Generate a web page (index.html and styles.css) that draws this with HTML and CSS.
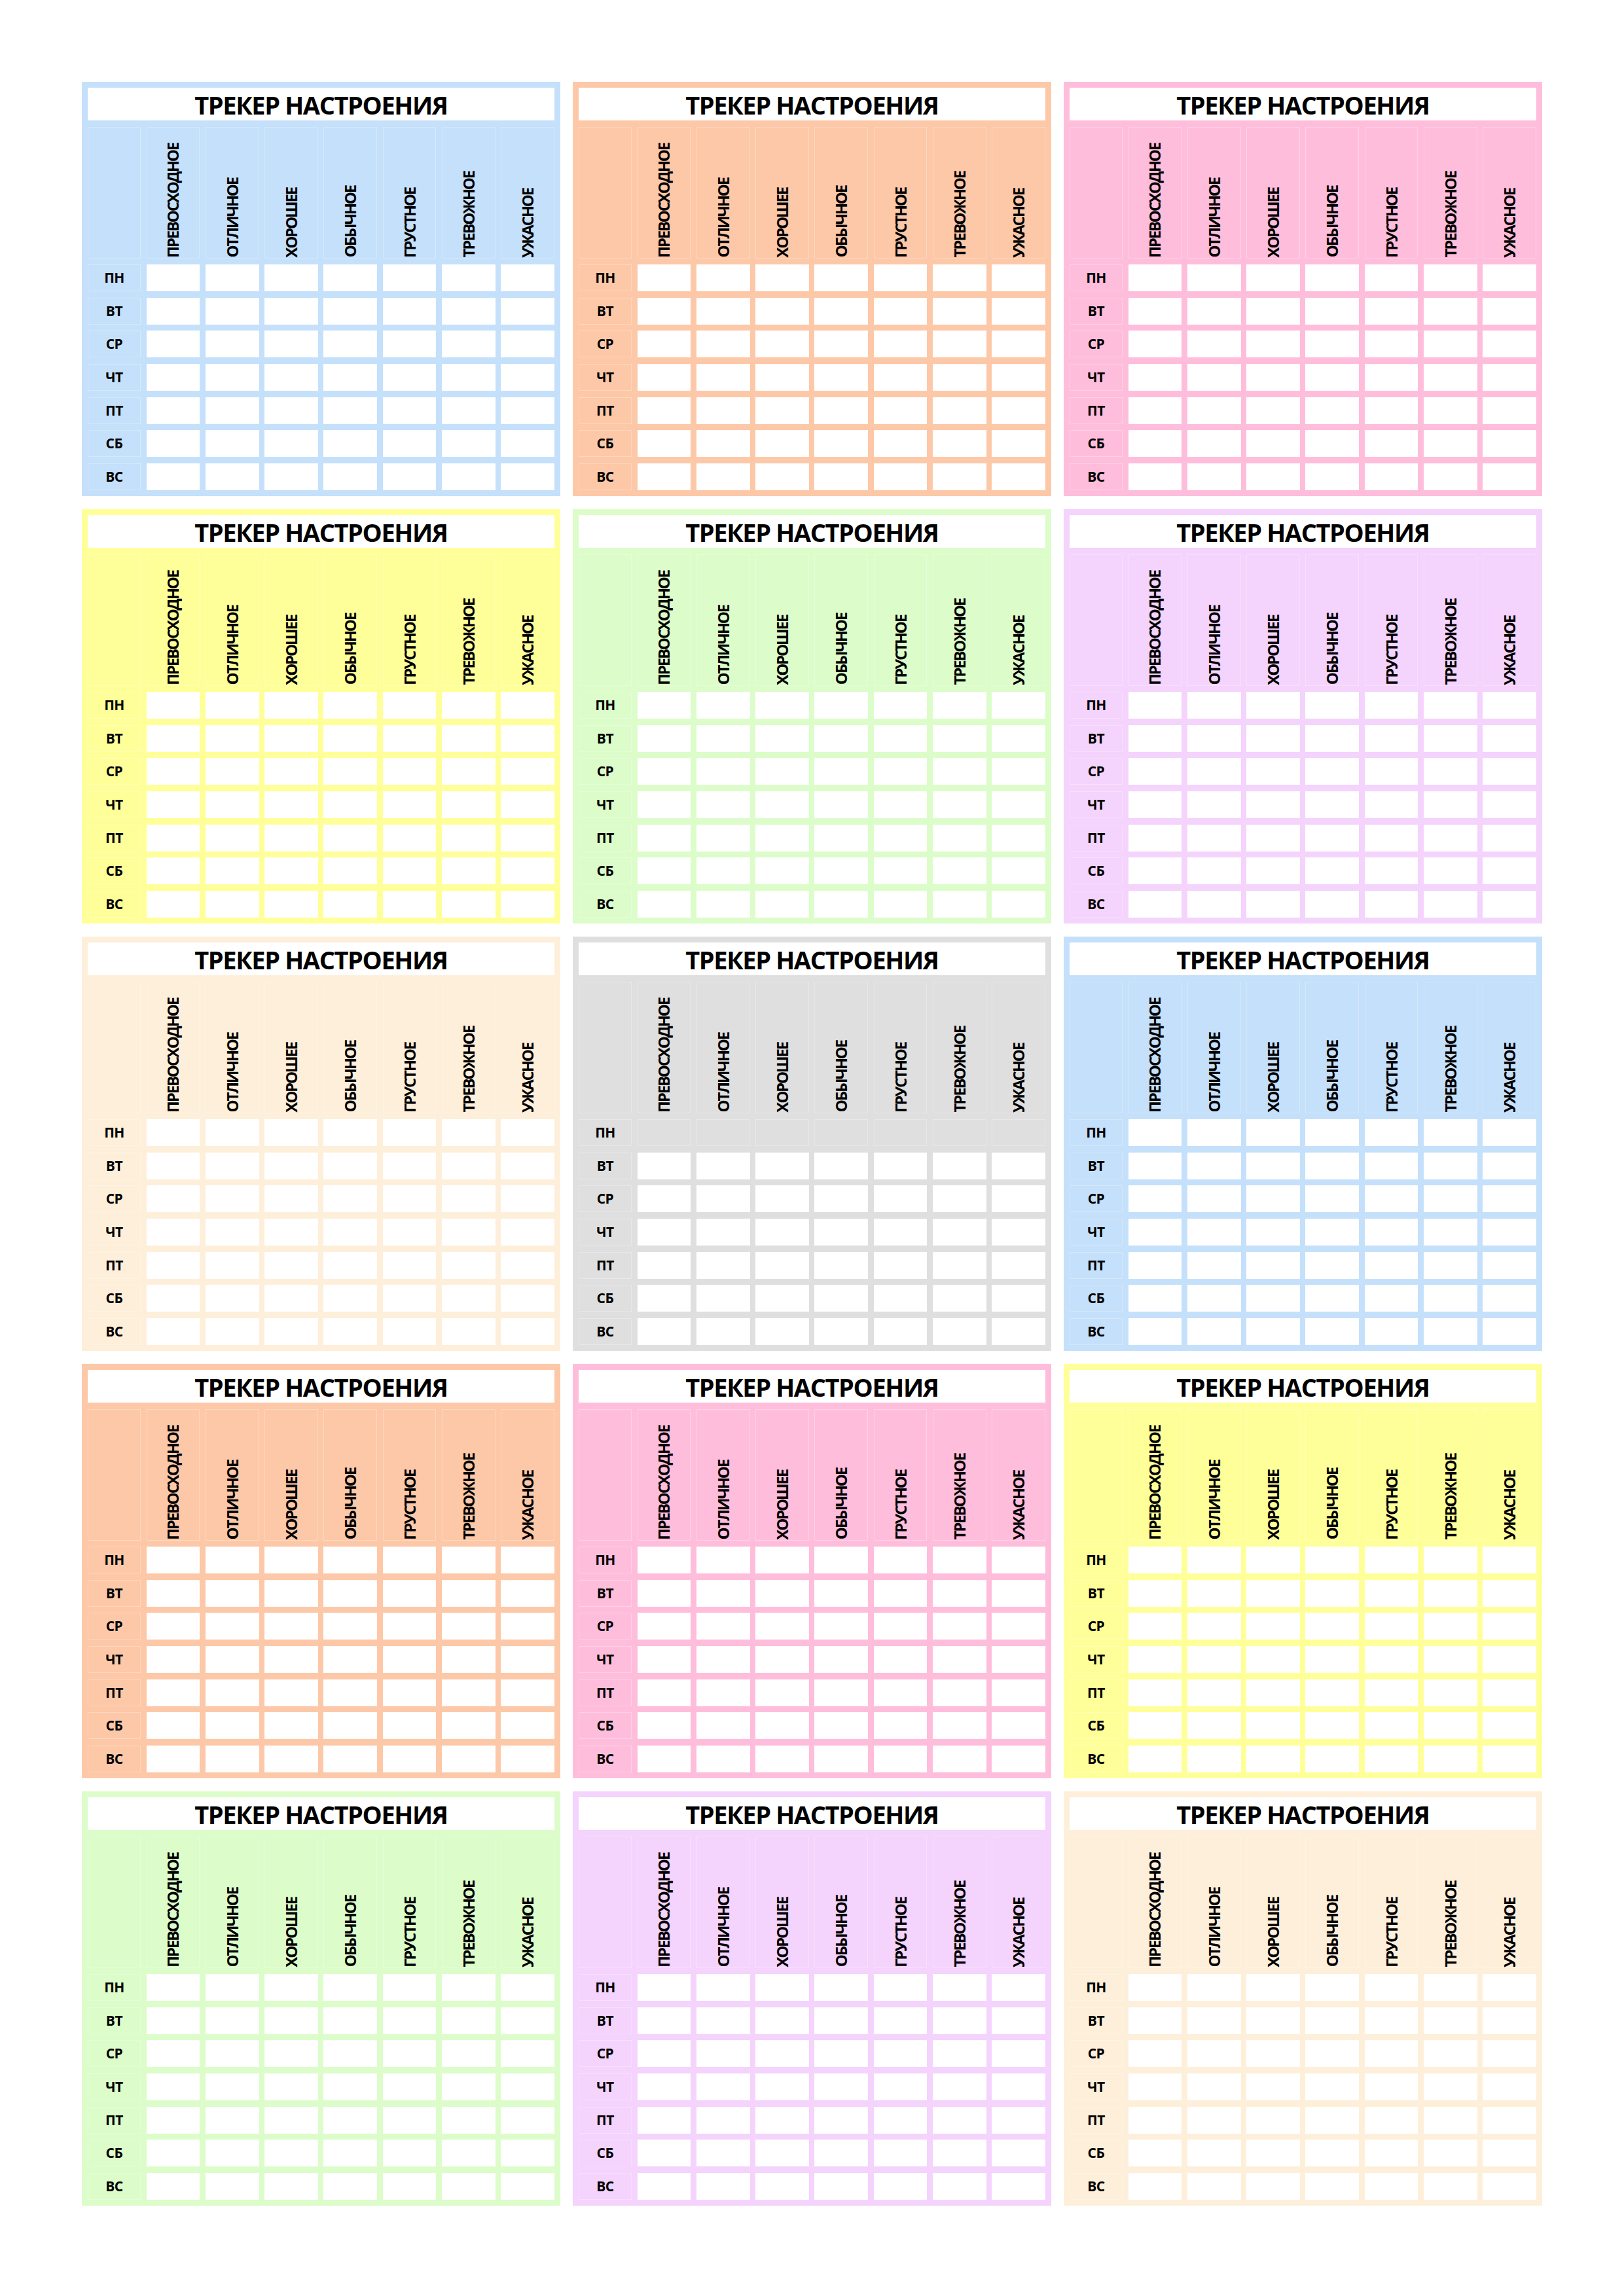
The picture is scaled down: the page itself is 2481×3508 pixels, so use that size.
FILE: index.html
```html
<!DOCTYPE html>
<html lang="ru">
<head>
<meta charset="utf-8">
<title>Трекер настроения</title>
<link rel="stylesheet" href="styles.css">
</head>
<body>
<main class="page">

<section class="card blue">
<h2 class="title">ТРЕКЕР НАСТРОЕНИЯ</h2>
<div class="corner"></div><div class="mood"><span>ПРЕВОСХОДНОЕ</span></div><div class="mood"><span>ОТЛИЧНОЕ</span></div><div class="mood"><span>ХОРОШЕЕ</span></div><div class="mood"><span>ОБЫЧНОЕ</span></div><div class="mood"><span>ГРУСТНОЕ</span></div><div class="mood"><span>ТРЕВОЖНОЕ</span></div><div class="mood"><span>УЖАСНОЕ</span></div>
<div class="day">ПН</div><div class="cell"></div><div class="cell"></div><div class="cell"></div><div class="cell"></div><div class="cell"></div><div class="cell"></div><div class="cell"></div>
<div class="day">ВТ</div><div class="cell"></div><div class="cell"></div><div class="cell"></div><div class="cell"></div><div class="cell"></div><div class="cell"></div><div class="cell"></div>
<div class="day">СР</div><div class="cell"></div><div class="cell"></div><div class="cell"></div><div class="cell"></div><div class="cell"></div><div class="cell"></div><div class="cell"></div>
<div class="day">ЧТ</div><div class="cell"></div><div class="cell"></div><div class="cell"></div><div class="cell"></div><div class="cell"></div><div class="cell"></div><div class="cell"></div>
<div class="day">ПТ</div><div class="cell"></div><div class="cell"></div><div class="cell"></div><div class="cell"></div><div class="cell"></div><div class="cell"></div><div class="cell"></div>
<div class="day">СБ</div><div class="cell"></div><div class="cell"></div><div class="cell"></div><div class="cell"></div><div class="cell"></div><div class="cell"></div><div class="cell"></div>
<div class="day">ВС</div><div class="cell"></div><div class="cell"></div><div class="cell"></div><div class="cell"></div><div class="cell"></div><div class="cell"></div><div class="cell"></div>
</section>

<section class="card peach">
<h2 class="title">ТРЕКЕР НАСТРОЕНИЯ</h2>
<div class="corner"></div><div class="mood"><span>ПРЕВОСХОДНОЕ</span></div><div class="mood"><span>ОТЛИЧНОЕ</span></div><div class="mood"><span>ХОРОШЕЕ</span></div><div class="mood"><span>ОБЫЧНОЕ</span></div><div class="mood"><span>ГРУСТНОЕ</span></div><div class="mood"><span>ТРЕВОЖНОЕ</span></div><div class="mood"><span>УЖАСНОЕ</span></div>
<div class="day">ПН</div><div class="cell"></div><div class="cell"></div><div class="cell"></div><div class="cell"></div><div class="cell"></div><div class="cell"></div><div class="cell"></div>
<div class="day">ВТ</div><div class="cell"></div><div class="cell"></div><div class="cell"></div><div class="cell"></div><div class="cell"></div><div class="cell"></div><div class="cell"></div>
<div class="day">СР</div><div class="cell"></div><div class="cell"></div><div class="cell"></div><div class="cell"></div><div class="cell"></div><div class="cell"></div><div class="cell"></div>
<div class="day">ЧТ</div><div class="cell"></div><div class="cell"></div><div class="cell"></div><div class="cell"></div><div class="cell"></div><div class="cell"></div><div class="cell"></div>
<div class="day">ПТ</div><div class="cell"></div><div class="cell"></div><div class="cell"></div><div class="cell"></div><div class="cell"></div><div class="cell"></div><div class="cell"></div>
<div class="day">СБ</div><div class="cell"></div><div class="cell"></div><div class="cell"></div><div class="cell"></div><div class="cell"></div><div class="cell"></div><div class="cell"></div>
<div class="day">ВС</div><div class="cell"></div><div class="cell"></div><div class="cell"></div><div class="cell"></div><div class="cell"></div><div class="cell"></div><div class="cell"></div>
</section>

<section class="card pink">
<h2 class="title">ТРЕКЕР НАСТРОЕНИЯ</h2>
<div class="corner"></div><div class="mood"><span>ПРЕВОСХОДНОЕ</span></div><div class="mood"><span>ОТЛИЧНОЕ</span></div><div class="mood"><span>ХОРОШЕЕ</span></div><div class="mood"><span>ОБЫЧНОЕ</span></div><div class="mood"><span>ГРУСТНОЕ</span></div><div class="mood"><span>ТРЕВОЖНОЕ</span></div><div class="mood"><span>УЖАСНОЕ</span></div>
<div class="day">ПН</div><div class="cell"></div><div class="cell"></div><div class="cell"></div><div class="cell"></div><div class="cell"></div><div class="cell"></div><div class="cell"></div>
<div class="day">ВТ</div><div class="cell"></div><div class="cell"></div><div class="cell"></div><div class="cell"></div><div class="cell"></div><div class="cell"></div><div class="cell"></div>
<div class="day">СР</div><div class="cell"></div><div class="cell"></div><div class="cell"></div><div class="cell"></div><div class="cell"></div><div class="cell"></div><div class="cell"></div>
<div class="day">ЧТ</div><div class="cell"></div><div class="cell"></div><div class="cell"></div><div class="cell"></div><div class="cell"></div><div class="cell"></div><div class="cell"></div>
<div class="day">ПТ</div><div class="cell"></div><div class="cell"></div><div class="cell"></div><div class="cell"></div><div class="cell"></div><div class="cell"></div><div class="cell"></div>
<div class="day">СБ</div><div class="cell"></div><div class="cell"></div><div class="cell"></div><div class="cell"></div><div class="cell"></div><div class="cell"></div><div class="cell"></div>
<div class="day">ВС</div><div class="cell"></div><div class="cell"></div><div class="cell"></div><div class="cell"></div><div class="cell"></div><div class="cell"></div><div class="cell"></div>
</section>

<section class="card yellow">
<h2 class="title">ТРЕКЕР НАСТРОЕНИЯ</h2>
<div class="corner"></div><div class="mood"><span>ПРЕВОСХОДНОЕ</span></div><div class="mood"><span>ОТЛИЧНОЕ</span></div><div class="mood"><span>ХОРОШЕЕ</span></div><div class="mood"><span>ОБЫЧНОЕ</span></div><div class="mood"><span>ГРУСТНОЕ</span></div><div class="mood"><span>ТРЕВОЖНОЕ</span></div><div class="mood"><span>УЖАСНОЕ</span></div>
<div class="day">ПН</div><div class="cell"></div><div class="cell"></div><div class="cell"></div><div class="cell"></div><div class="cell"></div><div class="cell"></div><div class="cell"></div>
<div class="day">ВТ</div><div class="cell"></div><div class="cell"></div><div class="cell"></div><div class="cell"></div><div class="cell"></div><div class="cell"></div><div class="cell"></div>
<div class="day">СР</div><div class="cell"></div><div class="cell"></div><div class="cell"></div><div class="cell"></div><div class="cell"></div><div class="cell"></div><div class="cell"></div>
<div class="day">ЧТ</div><div class="cell"></div><div class="cell"></div><div class="cell"></div><div class="cell"></div><div class="cell"></div><div class="cell"></div><div class="cell"></div>
<div class="day">ПТ</div><div class="cell"></div><div class="cell"></div><div class="cell"></div><div class="cell"></div><div class="cell"></div><div class="cell"></div><div class="cell"></div>
<div class="day">СБ</div><div class="cell"></div><div class="cell"></div><div class="cell"></div><div class="cell"></div><div class="cell"></div><div class="cell"></div><div class="cell"></div>
<div class="day">ВС</div><div class="cell"></div><div class="cell"></div><div class="cell"></div><div class="cell"></div><div class="cell"></div><div class="cell"></div><div class="cell"></div>
</section>

<section class="card green">
<h2 class="title">ТРЕКЕР НАСТРОЕНИЯ</h2>
<div class="corner"></div><div class="mood"><span>ПРЕВОСХОДНОЕ</span></div><div class="mood"><span>ОТЛИЧНОЕ</span></div><div class="mood"><span>ХОРОШЕЕ</span></div><div class="mood"><span>ОБЫЧНОЕ</span></div><div class="mood"><span>ГРУСТНОЕ</span></div><div class="mood"><span>ТРЕВОЖНОЕ</span></div><div class="mood"><span>УЖАСНОЕ</span></div>
<div class="day">ПН</div><div class="cell"></div><div class="cell"></div><div class="cell"></div><div class="cell"></div><div class="cell"></div><div class="cell"></div><div class="cell"></div>
<div class="day">ВТ</div><div class="cell"></div><div class="cell"></div><div class="cell"></div><div class="cell"></div><div class="cell"></div><div class="cell"></div><div class="cell"></div>
<div class="day">СР</div><div class="cell"></div><div class="cell"></div><div class="cell"></div><div class="cell"></div><div class="cell"></div><div class="cell"></div><div class="cell"></div>
<div class="day">ЧТ</div><div class="cell"></div><div class="cell"></div><div class="cell"></div><div class="cell"></div><div class="cell"></div><div class="cell"></div><div class="cell"></div>
<div class="day">ПТ</div><div class="cell"></div><div class="cell"></div><div class="cell"></div><div class="cell"></div><div class="cell"></div><div class="cell"></div><div class="cell"></div>
<div class="day">СБ</div><div class="cell"></div><div class="cell"></div><div class="cell"></div><div class="cell"></div><div class="cell"></div><div class="cell"></div><div class="cell"></div>
<div class="day">ВС</div><div class="cell"></div><div class="cell"></div><div class="cell"></div><div class="cell"></div><div class="cell"></div><div class="cell"></div><div class="cell"></div>
</section>

<section class="card lavender">
<h2 class="title">ТРЕКЕР НАСТРОЕНИЯ</h2>
<div class="corner"></div><div class="mood"><span>ПРЕВОСХОДНОЕ</span></div><div class="mood"><span>ОТЛИЧНОЕ</span></div><div class="mood"><span>ХОРОШЕЕ</span></div><div class="mood"><span>ОБЫЧНОЕ</span></div><div class="mood"><span>ГРУСТНОЕ</span></div><div class="mood"><span>ТРЕВОЖНОЕ</span></div><div class="mood"><span>УЖАСНОЕ</span></div>
<div class="day">ПН</div><div class="cell"></div><div class="cell"></div><div class="cell"></div><div class="cell"></div><div class="cell"></div><div class="cell"></div><div class="cell"></div>
<div class="day">ВТ</div><div class="cell"></div><div class="cell"></div><div class="cell"></div><div class="cell"></div><div class="cell"></div><div class="cell"></div><div class="cell"></div>
<div class="day">СР</div><div class="cell"></div><div class="cell"></div><div class="cell"></div><div class="cell"></div><div class="cell"></div><div class="cell"></div><div class="cell"></div>
<div class="day">ЧТ</div><div class="cell"></div><div class="cell"></div><div class="cell"></div><div class="cell"></div><div class="cell"></div><div class="cell"></div><div class="cell"></div>
<div class="day">ПТ</div><div class="cell"></div><div class="cell"></div><div class="cell"></div><div class="cell"></div><div class="cell"></div><div class="cell"></div><div class="cell"></div>
<div class="day">СБ</div><div class="cell"></div><div class="cell"></div><div class="cell"></div><div class="cell"></div><div class="cell"></div><div class="cell"></div><div class="cell"></div>
<div class="day">ВС</div><div class="cell"></div><div class="cell"></div><div class="cell"></div><div class="cell"></div><div class="cell"></div><div class="cell"></div><div class="cell"></div>
</section>

<section class="card cream">
<h2 class="title">ТРЕКЕР НАСТРОЕНИЯ</h2>
<div class="corner"></div><div class="mood"><span>ПРЕВОСХОДНОЕ</span></div><div class="mood"><span>ОТЛИЧНОЕ</span></div><div class="mood"><span>ХОРОШЕЕ</span></div><div class="mood"><span>ОБЫЧНОЕ</span></div><div class="mood"><span>ГРУСТНОЕ</span></div><div class="mood"><span>ТРЕВОЖНОЕ</span></div><div class="mood"><span>УЖАСНОЕ</span></div>
<div class="day">ПН</div><div class="cell"></div><div class="cell"></div><div class="cell"></div><div class="cell"></div><div class="cell"></div><div class="cell"></div><div class="cell"></div>
<div class="day">ВТ</div><div class="cell"></div><div class="cell"></div><div class="cell"></div><div class="cell"></div><div class="cell"></div><div class="cell"></div><div class="cell"></div>
<div class="day">СР</div><div class="cell"></div><div class="cell"></div><div class="cell"></div><div class="cell"></div><div class="cell"></div><div class="cell"></div><div class="cell"></div>
<div class="day">ЧТ</div><div class="cell"></div><div class="cell"></div><div class="cell"></div><div class="cell"></div><div class="cell"></div><div class="cell"></div><div class="cell"></div>
<div class="day">ПТ</div><div class="cell"></div><div class="cell"></div><div class="cell"></div><div class="cell"></div><div class="cell"></div><div class="cell"></div><div class="cell"></div>
<div class="day">СБ</div><div class="cell"></div><div class="cell"></div><div class="cell"></div><div class="cell"></div><div class="cell"></div><div class="cell"></div><div class="cell"></div>
<div class="day">ВС</div><div class="cell"></div><div class="cell"></div><div class="cell"></div><div class="cell"></div><div class="cell"></div><div class="cell"></div><div class="cell"></div>
</section>

<section class="card grey">
<h2 class="title">ТРЕКЕР НАСТРОЕНИЯ</h2>
<div class="corner"></div><div class="mood"><span>ПРЕВОСХОДНОЕ</span></div><div class="mood"><span>ОТЛИЧНОЕ</span></div><div class="mood"><span>ХОРОШЕЕ</span></div><div class="mood"><span>ОБЫЧНОЕ</span></div><div class="mood"><span>ГРУСТНОЕ</span></div><div class="mood"><span>ТРЕВОЖНОЕ</span></div><div class="mood"><span>УЖАСНОЕ</span></div>
<div class="day">ПН</div><div class="cell blank"></div><div class="cell blank"></div><div class="cell blank"></div><div class="cell blank"></div><div class="cell blank"></div><div class="cell blank"></div><div class="cell blank"></div>
<div class="day">ВТ</div><div class="cell"></div><div class="cell"></div><div class="cell"></div><div class="cell"></div><div class="cell"></div><div class="cell"></div><div class="cell"></div>
<div class="day">СР</div><div class="cell"></div><div class="cell"></div><div class="cell"></div><div class="cell"></div><div class="cell"></div><div class="cell"></div><div class="cell"></div>
<div class="day">ЧТ</div><div class="cell"></div><div class="cell"></div><div class="cell"></div><div class="cell"></div><div class="cell"></div><div class="cell"></div><div class="cell"></div>
<div class="day">ПТ</div><div class="cell"></div><div class="cell"></div><div class="cell"></div><div class="cell"></div><div class="cell"></div><div class="cell"></div><div class="cell"></div>
<div class="day">СБ</div><div class="cell"></div><div class="cell"></div><div class="cell"></div><div class="cell"></div><div class="cell"></div><div class="cell"></div><div class="cell"></div>
<div class="day">ВС</div><div class="cell"></div><div class="cell"></div><div class="cell"></div><div class="cell"></div><div class="cell"></div><div class="cell"></div><div class="cell"></div>
</section>

<section class="card blue">
<h2 class="title">ТРЕКЕР НАСТРОЕНИЯ</h2>
<div class="corner"></div><div class="mood"><span>ПРЕВОСХОДНОЕ</span></div><div class="mood"><span>ОТЛИЧНОЕ</span></div><div class="mood"><span>ХОРОШЕЕ</span></div><div class="mood"><span>ОБЫЧНОЕ</span></div><div class="mood"><span>ГРУСТНОЕ</span></div><div class="mood"><span>ТРЕВОЖНОЕ</span></div><div class="mood"><span>УЖАСНОЕ</span></div>
<div class="day">ПН</div><div class="cell"></div><div class="cell"></div><div class="cell"></div><div class="cell"></div><div class="cell"></div><div class="cell"></div><div class="cell"></div>
<div class="day">ВТ</div><div class="cell"></div><div class="cell"></div><div class="cell"></div><div class="cell"></div><div class="cell"></div><div class="cell"></div><div class="cell"></div>
<div class="day">СР</div><div class="cell"></div><div class="cell"></div><div class="cell"></div><div class="cell"></div><div class="cell"></div><div class="cell"></div><div class="cell"></div>
<div class="day">ЧТ</div><div class="cell"></div><div class="cell"></div><div class="cell"></div><div class="cell"></div><div class="cell"></div><div class="cell"></div><div class="cell"></div>
<div class="day">ПТ</div><div class="cell"></div><div class="cell"></div><div class="cell"></div><div class="cell"></div><div class="cell"></div><div class="cell"></div><div class="cell"></div>
<div class="day">СБ</div><div class="cell"></div><div class="cell"></div><div class="cell"></div><div class="cell"></div><div class="cell"></div><div class="cell"></div><div class="cell"></div>
<div class="day">ВС</div><div class="cell"></div><div class="cell"></div><div class="cell"></div><div class="cell"></div><div class="cell"></div><div class="cell"></div><div class="cell"></div>
</section>

<section class="card peach">
<h2 class="title">ТРЕКЕР НАСТРОЕНИЯ</h2>
<div class="corner"></div><div class="mood"><span>ПРЕВОСХОДНОЕ</span></div><div class="mood"><span>ОТЛИЧНОЕ</span></div><div class="mood"><span>ХОРОШЕЕ</span></div><div class="mood"><span>ОБЫЧНОЕ</span></div><div class="mood"><span>ГРУСТНОЕ</span></div><div class="mood"><span>ТРЕВОЖНОЕ</span></div><div class="mood"><span>УЖАСНОЕ</span></div>
<div class="day">ПН</div><div class="cell"></div><div class="cell"></div><div class="cell"></div><div class="cell"></div><div class="cell"></div><div class="cell"></div><div class="cell"></div>
<div class="day">ВТ</div><div class="cell"></div><div class="cell"></div><div class="cell"></div><div class="cell"></div><div class="cell"></div><div class="cell"></div><div class="cell"></div>
<div class="day">СР</div><div class="cell"></div><div class="cell"></div><div class="cell"></div><div class="cell"></div><div class="cell"></div><div class="cell"></div><div class="cell"></div>
<div class="day">ЧТ</div><div class="cell"></div><div class="cell"></div><div class="cell"></div><div class="cell"></div><div class="cell"></div><div class="cell"></div><div class="cell"></div>
<div class="day">ПТ</div><div class="cell"></div><div class="cell"></div><div class="cell"></div><div class="cell"></div><div class="cell"></div><div class="cell"></div><div class="cell"></div>
<div class="day">СБ</div><div class="cell"></div><div class="cell"></div><div class="cell"></div><div class="cell"></div><div class="cell"></div><div class="cell"></div><div class="cell"></div>
<div class="day">ВС</div><div class="cell"></div><div class="cell"></div><div class="cell"></div><div class="cell"></div><div class="cell"></div><div class="cell"></div><div class="cell"></div>
</section>

<section class="card pink">
<h2 class="title">ТРЕКЕР НАСТРОЕНИЯ</h2>
<div class="corner"></div><div class="mood"><span>ПРЕВОСХОДНОЕ</span></div><div class="mood"><span>ОТЛИЧНОЕ</span></div><div class="mood"><span>ХОРОШЕЕ</span></div><div class="mood"><span>ОБЫЧНОЕ</span></div><div class="mood"><span>ГРУСТНОЕ</span></div><div class="mood"><span>ТРЕВОЖНОЕ</span></div><div class="mood"><span>УЖАСНОЕ</span></div>
<div class="day">ПН</div><div class="cell"></div><div class="cell"></div><div class="cell"></div><div class="cell"></div><div class="cell"></div><div class="cell"></div><div class="cell"></div>
<div class="day">ВТ</div><div class="cell"></div><div class="cell"></div><div class="cell"></div><div class="cell"></div><div class="cell"></div><div class="cell"></div><div class="cell"></div>
<div class="day">СР</div><div class="cell"></div><div class="cell"></div><div class="cell"></div><div class="cell"></div><div class="cell"></div><div class="cell"></div><div class="cell"></div>
<div class="day">ЧТ</div><div class="cell"></div><div class="cell"></div><div class="cell"></div><div class="cell"></div><div class="cell"></div><div class="cell"></div><div class="cell"></div>
<div class="day">ПТ</div><div class="cell"></div><div class="cell"></div><div class="cell"></div><div class="cell"></div><div class="cell"></div><div class="cell"></div><div class="cell"></div>
<div class="day">СБ</div><div class="cell"></div><div class="cell"></div><div class="cell"></div><div class="cell"></div><div class="cell"></div><div class="cell"></div><div class="cell"></div>
<div class="day">ВС</div><div class="cell"></div><div class="cell"></div><div class="cell"></div><div class="cell"></div><div class="cell"></div><div class="cell"></div><div class="cell"></div>
</section>

<section class="card yellow">
<h2 class="title">ТРЕКЕР НАСТРОЕНИЯ</h2>
<div class="corner"></div><div class="mood"><span>ПРЕВОСХОДНОЕ</span></div><div class="mood"><span>ОТЛИЧНОЕ</span></div><div class="mood"><span>ХОРОШЕЕ</span></div><div class="mood"><span>ОБЫЧНОЕ</span></div><div class="mood"><span>ГРУСТНОЕ</span></div><div class="mood"><span>ТРЕВОЖНОЕ</span></div><div class="mood"><span>УЖАСНОЕ</span></div>
<div class="day">ПН</div><div class="cell"></div><div class="cell"></div><div class="cell"></div><div class="cell"></div><div class="cell"></div><div class="cell"></div><div class="cell"></div>
<div class="day">ВТ</div><div class="cell"></div><div class="cell"></div><div class="cell"></div><div class="cell"></div><div class="cell"></div><div class="cell"></div><div class="cell"></div>
<div class="day">СР</div><div class="cell"></div><div class="cell"></div><div class="cell"></div><div class="cell"></div><div class="cell"></div><div class="cell"></div><div class="cell"></div>
<div class="day">ЧТ</div><div class="cell"></div><div class="cell"></div><div class="cell"></div><div class="cell"></div><div class="cell"></div><div class="cell"></div><div class="cell"></div>
<div class="day">ПТ</div><div class="cell"></div><div class="cell"></div><div class="cell"></div><div class="cell"></div><div class="cell"></div><div class="cell"></div><div class="cell"></div>
<div class="day">СБ</div><div class="cell"></div><div class="cell"></div><div class="cell"></div><div class="cell"></div><div class="cell"></div><div class="cell"></div><div class="cell"></div>
<div class="day">ВС</div><div class="cell"></div><div class="cell"></div><div class="cell"></div><div class="cell"></div><div class="cell"></div><div class="cell"></div><div class="cell"></div>
</section>

<section class="card green">
<h2 class="title">ТРЕКЕР НАСТРОЕНИЯ</h2>
<div class="corner"></div><div class="mood"><span>ПРЕВОСХОДНОЕ</span></div><div class="mood"><span>ОТЛИЧНОЕ</span></div><div class="mood"><span>ХОРОШЕЕ</span></div><div class="mood"><span>ОБЫЧНОЕ</span></div><div class="mood"><span>ГРУСТНОЕ</span></div><div class="mood"><span>ТРЕВОЖНОЕ</span></div><div class="mood"><span>УЖАСНОЕ</span></div>
<div class="day">ПН</div><div class="cell"></div><div class="cell"></div><div class="cell"></div><div class="cell"></div><div class="cell"></div><div class="cell"></div><div class="cell"></div>
<div class="day">ВТ</div><div class="cell"></div><div class="cell"></div><div class="cell"></div><div class="cell"></div><div class="cell"></div><div class="cell"></div><div class="cell"></div>
<div class="day">СР</div><div class="cell"></div><div class="cell"></div><div class="cell"></div><div class="cell"></div><div class="cell"></div><div class="cell"></div><div class="cell"></div>
<div class="day">ЧТ</div><div class="cell"></div><div class="cell"></div><div class="cell"></div><div class="cell"></div><div class="cell"></div><div class="cell"></div><div class="cell"></div>
<div class="day">ПТ</div><div class="cell"></div><div class="cell"></div><div class="cell"></div><div class="cell"></div><div class="cell"></div><div class="cell"></div><div class="cell"></div>
<div class="day">СБ</div><div class="cell"></div><div class="cell"></div><div class="cell"></div><div class="cell"></div><div class="cell"></div><div class="cell"></div><div class="cell"></div>
<div class="day">ВС</div><div class="cell"></div><div class="cell"></div><div class="cell"></div><div class="cell"></div><div class="cell"></div><div class="cell"></div><div class="cell"></div>
</section>

<section class="card lavender">
<h2 class="title">ТРЕКЕР НАСТРОЕНИЯ</h2>
<div class="corner"></div><div class="mood"><span>ПРЕВОСХОДНОЕ</span></div><div class="mood"><span>ОТЛИЧНОЕ</span></div><div class="mood"><span>ХОРОШЕЕ</span></div><div class="mood"><span>ОБЫЧНОЕ</span></div><div class="mood"><span>ГРУСТНОЕ</span></div><div class="mood"><span>ТРЕВОЖНОЕ</span></div><div class="mood"><span>УЖАСНОЕ</span></div>
<div class="day">ПН</div><div class="cell"></div><div class="cell"></div><div class="cell"></div><div class="cell"></div><div class="cell"></div><div class="cell"></div><div class="cell"></div>
<div class="day">ВТ</div><div class="cell"></div><div class="cell"></div><div class="cell"></div><div class="cell"></div><div class="cell"></div><div class="cell"></div><div class="cell"></div>
<div class="day">СР</div><div class="cell"></div><div class="cell"></div><div class="cell"></div><div class="cell"></div><div class="cell"></div><div class="cell"></div><div class="cell"></div>
<div class="day">ЧТ</div><div class="cell"></div><div class="cell"></div><div class="cell"></div><div class="cell"></div><div class="cell"></div><div class="cell"></div><div class="cell"></div>
<div class="day">ПТ</div><div class="cell"></div><div class="cell"></div><div class="cell"></div><div class="cell"></div><div class="cell"></div><div class="cell"></div><div class="cell"></div>
<div class="day">СБ</div><div class="cell"></div><div class="cell"></div><div class="cell"></div><div class="cell"></div><div class="cell"></div><div class="cell"></div><div class="cell"></div>
<div class="day">ВС</div><div class="cell"></div><div class="cell"></div><div class="cell"></div><div class="cell"></div><div class="cell"></div><div class="cell"></div><div class="cell"></div>
</section>

<section class="card cream">
<h2 class="title">ТРЕКЕР НАСТРОЕНИЯ</h2>
<div class="corner"></div><div class="mood"><span>ПРЕВОСХОДНОЕ</span></div><div class="mood"><span>ОТЛИЧНОЕ</span></div><div class="mood"><span>ХОРОШЕЕ</span></div><div class="mood"><span>ОБЫЧНОЕ</span></div><div class="mood"><span>ГРУСТНОЕ</span></div><div class="mood"><span>ТРЕВОЖНОЕ</span></div><div class="mood"><span>УЖАСНОЕ</span></div>
<div class="day">ПН</div><div class="cell"></div><div class="cell"></div><div class="cell"></div><div class="cell"></div><div class="cell"></div><div class="cell"></div><div class="cell"></div>
<div class="day">ВТ</div><div class="cell"></div><div class="cell"></div><div class="cell"></div><div class="cell"></div><div class="cell"></div><div class="cell"></div><div class="cell"></div>
<div class="day">СР</div><div class="cell"></div><div class="cell"></div><div class="cell"></div><div class="cell"></div><div class="cell"></div><div class="cell"></div><div class="cell"></div>
<div class="day">ЧТ</div><div class="cell"></div><div class="cell"></div><div class="cell"></div><div class="cell"></div><div class="cell"></div><div class="cell"></div><div class="cell"></div>
<div class="day">ПТ</div><div class="cell"></div><div class="cell"></div><div class="cell"></div><div class="cell"></div><div class="cell"></div><div class="cell"></div><div class="cell"></div>
<div class="day">СБ</div><div class="cell"></div><div class="cell"></div><div class="cell"></div><div class="cell"></div><div class="cell"></div><div class="cell"></div><div class="cell"></div>
<div class="day">ВС</div><div class="cell"></div><div class="cell"></div><div class="cell"></div><div class="cell"></div><div class="cell"></div><div class="cell"></div><div class="cell"></div>
</section>

</main>
</body>
</html>
```

FILE: styles.css
```css
html, body {
  margin: 0;
  padding: 0;
  background: #ffffff;
}

body {
  font-family: "Open Sans", "Noto Sans", "DejaVu Sans", sans-serif;
  color: #000000;
}

.page {
  display: grid;
  grid-template-columns: repeat(3, 731px);
  column-gap: 19px;
  row-gap: 20px;
  padding: 125px 0 0 125px;
}

.card {
  display: grid;
  grid-template-columns: 81px repeat(7, 1fr);
  grid-template-rows: 50px 201px repeat(7, 41px);
  column-gap: 8.6px;
  row-gap: 9.6px;
  padding: 9px;
  height: 633px;
  box-sizing: border-box;
  background: var(--bg);
}

.blue { --bg: #c5e0fa; }
.peach { --bg: #fdc8a8; }
.pink { --bg: #ffbddc; }
.yellow { --bg: #ffff99; }
.green { --bg: #dcfdca; }
.lavender { --bg: #f4d3fc; }
.cream { --bg: #feefda; }
.grey { --bg: #dfdfdf; }

.title {
  grid-column: 1 / -1;
  margin: 0;
  background: #ffffff;
  display: flex;
  align-items: center;
  justify-content: center;
  font-size: 38px;
  font-weight: 700;
  letter-spacing: -1.4px;
  line-height: 1;
  padding-top: 1px;
}

.corner,
.mood,
.day {
  box-shadow: inset 0 0 0 1px rgba(255, 255, 255, 0.28);
}

.mood {
  display: flex;
  align-items: flex-end;
  justify-content: center;
  padding-bottom: 1px;
}

.mood span {
  writing-mode: vertical-rl;
  transform: rotate(180deg);
  font-size: 24px;
  font-weight: 700;
  letter-spacing: -2.2px;
  line-height: 1;
}

.day {
  display: flex;
  align-items: center;
  justify-content: center;
  font-size: 21px;
  font-weight: 700;
  letter-spacing: -0.5px;
  line-height: 1;
}

.cell {
  background: #ffffff;
}

.cell.blank {
  background: transparent;
  box-shadow: inset 0 0 0 1px rgba(255, 255, 255, 0.28);
}
```
